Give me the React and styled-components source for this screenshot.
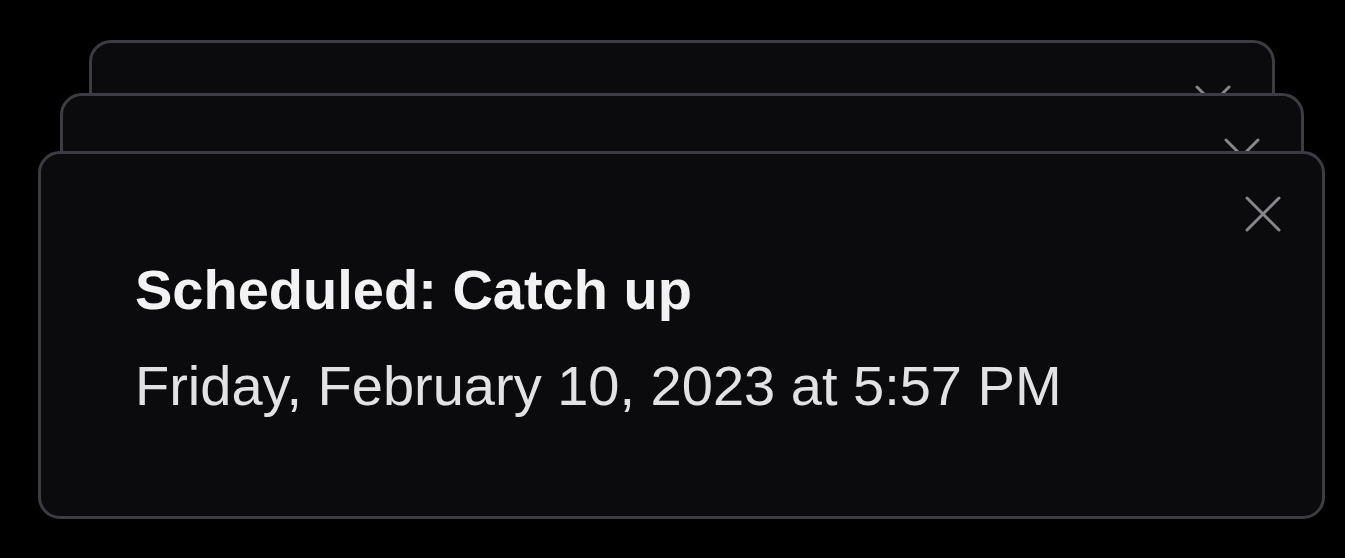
import React from 'react';
import styled, { createGlobalStyle } from 'styled-components';

const GlobalStyle = createGlobalStyle`
  html, body {
    margin: 0;
    padding: 0;
    background: #000;
  }
  body {
    font-family: "Liberation Sans", Arial, sans-serif;
    -webkit-font-smoothing: antialiased;
  }
`;

// back to front; only the front toast shows its text
const toasts = [
  { id: 3, width: 1186, offset: 111, front: false },
  { id: 2, width: 1244, offset: 58, front: false },
  { id: 1, width: 1287, offset: 0, front: true },
];

const CloseIcon = () => (
  <svg width="36" height="36" viewBox="0 0 36 36" fill="none">
    <path d="M2 2 34 34M34 2 2 34" stroke="currentColor" strokeWidth="3" strokeLinecap="round" />
  </svg>
);

const App = () => {
  return (
    <>
      <GlobalStyle />
      <Viewport>
        <Stack>
          {toasts.map((t) => (
            <Toast key={t.id} $width={t.width} $offset={t.offset}>
              <CloseButton aria-label="Close">
                <CloseIcon />
              </CloseButton>
              <Content $visible={t.front}>
                <Title>Scheduled: Catch up</Title>
                <Description>Friday, February 10, 2023 at 5:57 PM</Description>
              </Content>
            </Toast>
          ))}
        </Stack>
      </Viewport>
    </>
  );
};

export default App;

const Viewport = styled.div`
  width: 1345px;
  height: 558px;
  box-sizing: border-box;
  padding: 151px 0 0 38px;
  overflow: hidden;
`;

const Stack = styled.ol`
  display: grid;
  width: 1287px;
  margin: 0;
  padding: 0;
  list-style: none;
`;

const Toast = styled.li`
  grid-area: 1 / 1;
  justify-self: center;
  position: relative;
  width: ${({ $width }) => $width}px;
  height: 368px;
  box-sizing: border-box;
  padding: 102px 0 0 94px;
  background: #0b0b0e;
  border: 3px solid #3c3c42;
  border-radius: 22px;
  transform: translateY(-${({ $offset }) => $offset}px);
`;

const Content = styled.div`
  display: flex;
  flex-direction: column;
  gap: 29px;
  visibility: ${({ $visible }) => ($visible ? 'visible' : 'hidden')};
`;

const CloseButton = styled.button`
  position: absolute;
  top: 42px;
  right: 41px;
  display: flex;
  padding: 0;
  background: none;
  border: none;
  color: #86868c;
  cursor: pointer;
`;

const Title = styled.div`
  font-size: 56px;
  line-height: 67px;
  font-weight: 700;
  color: #f2f2f3;
`;

const Description = styled.div`
  font-size: 56px;
  line-height: 67px;
  font-weight: 400;
  color: #e2e2e5;
`;
